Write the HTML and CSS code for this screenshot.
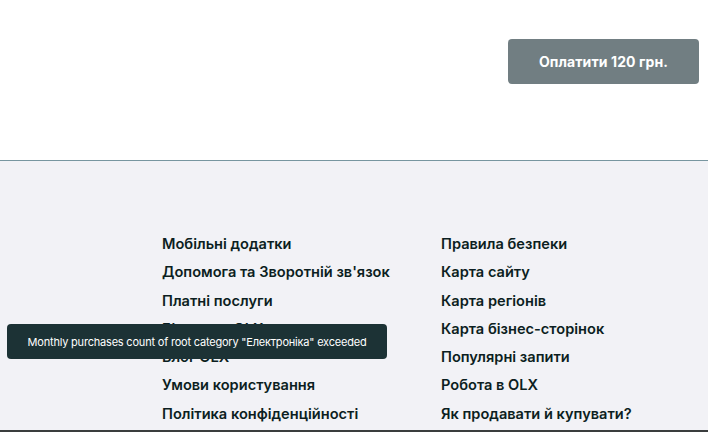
FILE: index.html
```html
<!DOCTYPE html>
<html lang="uk">
<head>
<meta charset="utf-8">
<title>OLX</title>
<link rel="stylesheet" href="styles.css">
</head>
<body>
<div class="page">
  <section class="top">
    <button class="pay">Оплатити 120 грн.</button>
  </section>
  <footer class="footer">
    <div class="cols">
      <ul class="col">
        <li>Мобільні додатки</li>
        <li>Допомога та Зворотній зв'язок</li>
        <li>Платні послуги</li>
        <li>Бізнес на OLX</li>
        <li>Блог OLX</li>
        <li>Умови користування</li>
        <li>Політика конфіденційності</li>
      </ul>
      <ul class="col">
        <li>Правила безпеки</li>
        <li>Карта сайту</li>
        <li>Карта регіонів</li>
        <li>Карта бізнес-сторінок</li>
        <li>Популярні запити</li>
        <li>Робота в OLX</li>
        <li>Як продавати й купувати?</li>
      </ul>
    </div>
    <div class="bottom-line"></div>
  </footer>
  <div class="toast">Monthly purchases count of root category "Електроніка" exceeded</div>
</div>
</body>
</html>
```

FILE: styles.css
```css
* { box-sizing: border-box; }
html, body { margin: 0; padding: 0; }
body {
  font-family: Inter, "Noto Sans", sans-serif;
  color: #0c1e21;
  background: #f2f2f6;
  height: 432px;
  overflow: hidden;
}
.page { position: relative; height: 432px; }
.top {
  height: 161px;
  background: #ffffff;
  display: flex;
  justify-content: flex-end;
  align-items: flex-start;
  padding: 39px 9px 0 0;
  border-bottom: 1px solid #7896a0;
}
.pay {
  width: 191px;
  height: 45px;
  border: none;
  border-radius: 4px;
  background: #717e82;
  color: #ffffff;
  font-family: Inter, "Noto Sans", sans-serif;
  font-size: 14px;
  font-weight: 700;
  letter-spacing: 0.1px;
}
.footer {
  background: #f2f2f6;
  padding-top: 69px;
}
.cols {
  display: grid;
  grid-template-columns: 279px 1fr;
  padding-left: 162px;
}
.col {
  list-style: none;
  margin: 0;
  padding: 0;
}
.col li {
  font-size: 14.6px;
  font-weight: 600;
  line-height: 28.3px;
  height: 28.3px;
  white-space: nowrap;
}
.bottom-line {
  margin-top: 2px;
  border-top: 2px solid #3a3d3e;
}
.toast {
  position: absolute;
  left: 7px;
  top: 324px;
  width: 380px;
  height: 35px;
  background: #1c3235;
  border-radius: 4px;
  color: #ffffff;
  font-size: 11px;
  letter-spacing: -0.2px;
  display: flex;
  align-items: center;
  justify-content: center;
  white-space: nowrap;
}
```
